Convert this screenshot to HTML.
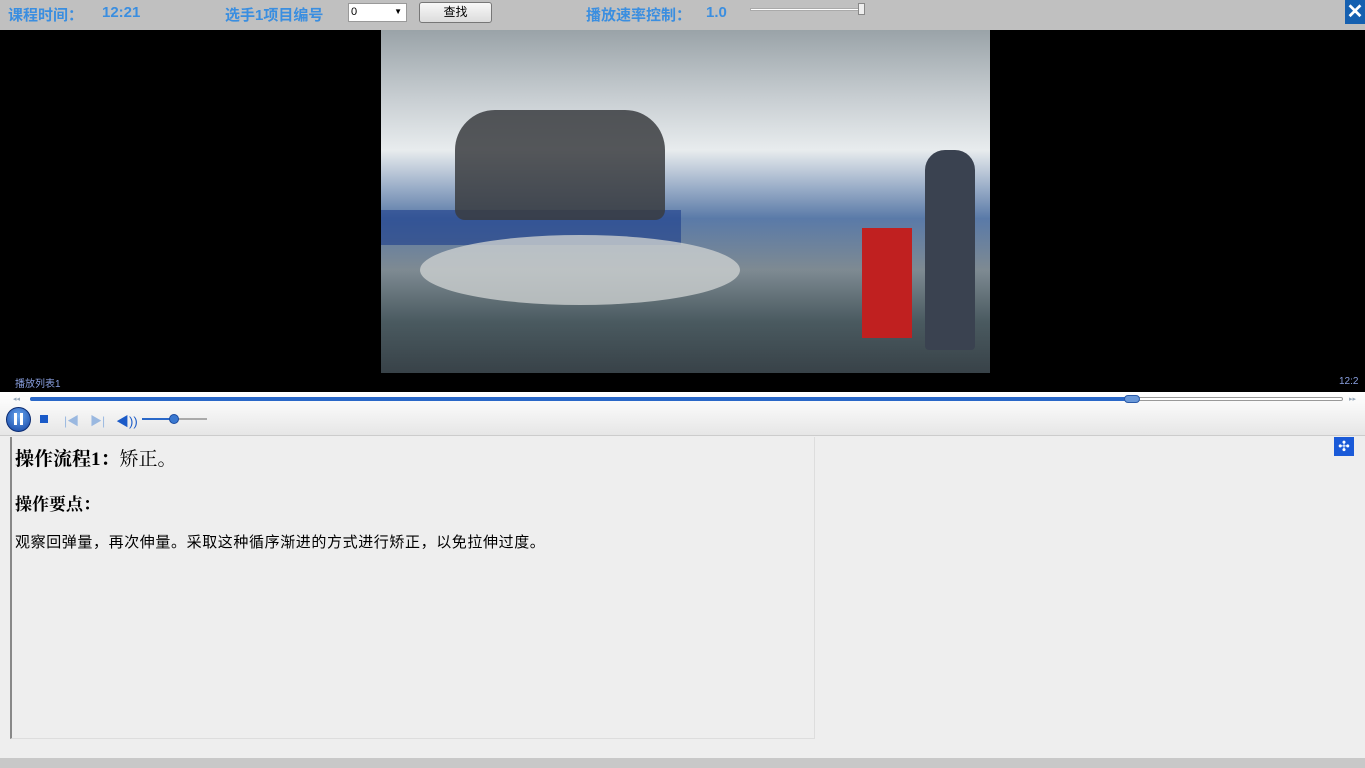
<!DOCTYPE html>
<html><head><meta charset="utf-8"><style>
*{margin:0;padding:0;box-sizing:border-box}
body{width:1365px;height:768px;background:#eeeeee;position:relative;overflow:hidden;font-family:"Liberation Sans","Noto Sans CJK SC",sans-serif}
.a{position:absolute}
.t{color:#3a8ee0;font-weight:bold;font-size:15px;top:4px}
</style></head><body>
<div class="a" style="left:0;top:0;width:1365px;height:30px;background:#c0c0c0"></div>
<div class="a t" style="left:8px">课程时间：</div>
<div class="a t" style="left:102px">12:21</div>
<div class="a t" style="left:225px">选手1项目编号</div>
<div class="a" style="left:348px;top:3px;width:59px;height:19px;background:#fff;border:1px solid #999;font-size:11px;padding-left:2px;line-height:16px">0<span style="position:absolute;right:4px;font-size:8px">▼</span></div>
<div class="a" style="left:419px;top:2px;width:73px;height:21px;background:linear-gradient(#f8f8f8,#dcdcdc);border:1px solid #777;border-radius:3px;font-size:12px;text-align:center;line-height:19px">查找</div>
<div class="a t" style="left:586px">播放速率控制：</div>
<div class="a t" style="left:706px">1.0</div>
<div class="a" style="left:750px;top:8px;width:112px;height:3px;background:#fff;border:1px solid #aaa"></div>
<div class="a" style="left:858px;top:3px;width:7px;height:12px;background:#eee;border:1px solid #888"></div>
<div class="a" style="left:1345px;top:0;width:20px;height:24px;background:#1560b0;color:#fff;font-size:20px;text-align:center;line-height:24px;font-weight:bold">✕</div>
<div class="a" style="left:0;top:30px;width:1365px;height:362px;background:#000"></div>
<div class="a" style="left:381px;top:30px;width:609px;height:343px;background:linear-gradient(#9aa3a8 0%,#c8ced2 20%,#e8ecee 35%,#5a7aa8 55%,#7e8a92 70%,#4a5a60 85%,#384248 100%)"></div>
<div class="a" style="left:381px;top:210px;width:300px;height:35px;background:#1a3c8a;opacity:.6"></div>
<div class="a" style="left:420px;top:235px;width:320px;height:70px;background:#ccd0d0;border-radius:50%;opacity:.8"></div>
<div class="a" style="left:455px;top:110px;width:210px;height:110px;background:#3a3c40;border-radius:40px 40px 10px 10px;opacity:.85"></div>
<div class="a" style="left:862px;top:228px;width:50px;height:110px;background:#c02020"></div>
<div class="a" style="left:925px;top:150px;width:50px;height:200px;background:#3a4250;border-radius:20px 20px 4px 4px"></div>
<div class="a" style="left:15px;top:375px;color:#8aa0e0;font-size:10px">播放列表1</div>
<div class="a" style="left:1339px;top:376px;color:#8aa0e0;font-size:10px">12:2</div>
<div class="a" style="left:0;top:392px;width:1365px;height:44px;background:linear-gradient(#fff,#f6f6f6 40%,#e6e6e6);border-bottom:1px solid #ccc"></div>
<div class="a" style="left:30px;top:397px;width:1313px;height:4px;border:1px solid #999;border-radius:2px;background:#fff"></div>
<div class="a" style="left:30px;top:397px;width:1102px;height:4px;background:#2a68c8;border-radius:2px"></div>
<div class="a" style="left:1124px;top:395px;width:16px;height:8px;background:#6a98d8;border:1px solid #2a5aa8;border-radius:4px"></div>
<div class="a" style="left:13px;top:395px;color:#9ab;font-size:7px">◂◂</div>
<div class="a" style="left:1349px;top:395px;color:#9ab;font-size:7px">▸▸</div>
<div class="a" style="left:6px;top:407px;width:25px;height:25px;border-radius:50%;background:radial-gradient(circle at 50% 35%,#6aa8f0,#1040a0);border:1px solid #0a2a70"></div>
<div class="a" style="left:14px;top:413px;width:3px;height:12px;background:#fff"></div>
<div class="a" style="left:20px;top:413px;width:3px;height:12px;background:#fff"></div>
<div class="a" style="left:40px;top:415px;width:8px;height:8px;background:#1a5ac8"></div>
<div class="a" style="left:64px;top:412px;color:#9ab8e0;font-size:12px">|◀</div>
<div class="a" style="left:90px;top:412px;color:#9ab8e0;font-size:12px">▶|</div>
<div class="a" style="left:116px;top:411px;color:#1a5ac8;font-size:13px">◀))</div>
<div class="a" style="left:142px;top:418px;width:65px;height:2px;background:#aaa"></div>
<div class="a" style="left:142px;top:418px;width:32px;height:2px;background:#2a68c8"></div>
<div class="a" style="left:169px;top:414px;width:10px;height:10px;border-radius:50%;background:#3a78d0;border:1px solid #1a4aa0"></div>
<div class="a" style="left:10px;top:437px;width:805px;height:302px;border-left:2px solid #888;border-right:1px solid #ddd;border-bottom:1px solid #ddd;background:#eeeeee"></div>
<div class="a" style="left:15px;top:444px;font-size:19px;font-family:'Liberation Serif','Noto Serif CJK SC',serif"><b>操作流程1：</b>矫正。</div>
<div class="a" style="left:15px;top:490px;font-size:17px;font-weight:bold;font-family:'Liberation Serif','Noto Serif CJK SC',serif">操作要点：</div>
<div class="a" style="left:15px;top:531px;font-size:15px;letter-spacing:0.6px">观察回弹量，再次伸量。采取这种循序渐进的方式进行矫正，以免拉伸过度。</div>
<div class="a" style="left:1334px;top:437px;width:20px;height:19px;background:#1a5ad8;color:#fff;font-size:14px;text-align:center;line-height:19px">✣</div>
<div class="a" style="left:0;top:758px;width:1365px;height:10px;background:#c8c8c8"></div>
</body></html>
